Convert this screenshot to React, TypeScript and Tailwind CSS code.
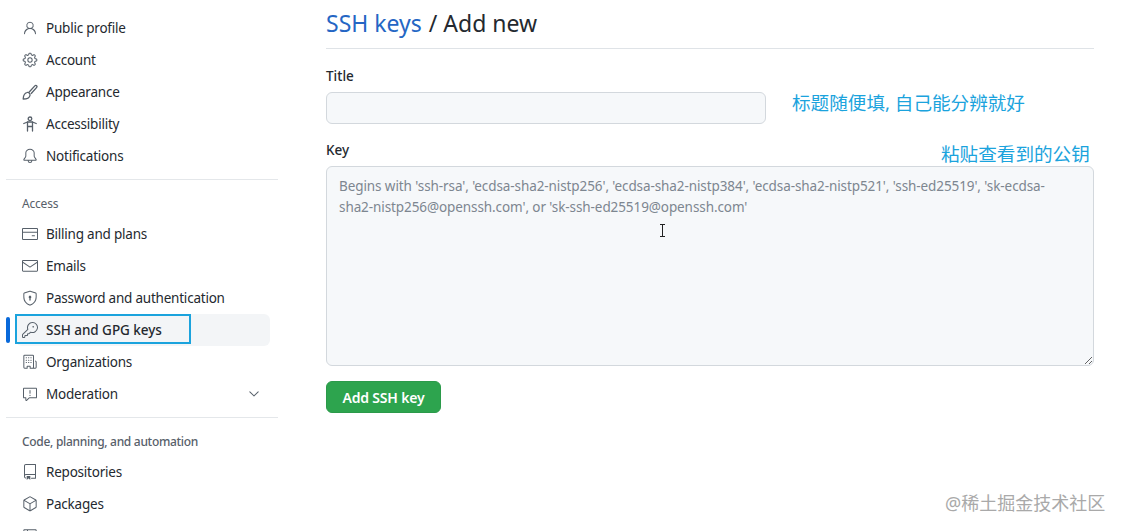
import type { ComponentType } from 'react';
import {
  GoPerson,
  GoGear,
  GoBell,
  GoCreditCard,
  GoMail,
  GoShieldLock,
  GoKey,
  GoOrganization,
  GoReport,
  GoChevronDown,
  GoRepo,
  GoPackage,
  GoTable,
} from 'react-icons/go';

type IconProps = { size?: number; className?: string };

function PaintbrushIcon({ size, className }: IconProps) {
  return (
    <svg width={size} height={size} viewBox="0 0 16 16" fill="none" stroke="currentColor" strokeWidth="1.3" strokeLinejoin="round" className={className}>
      <path d="M7 8.300 12.800 1.900c.6-.6 1.500-.6 1.900-.1.400.5.400 1.200-.2 1.800L9 9.800" />
      <path d="M5 8.500c1.600-.6 3.400.8 3 2.800-.4 2-3 3.700-6.800 3.700.2-1-.3-5.300 3.800-6.500Z" />
    </svg>
  );
}

function AccessibilityIcon({ size, className }: IconProps) {
  return (
    <svg width={size} height={size} viewBox="0 0 16 16" fill="none" stroke="currentColor" strokeWidth="1.3" strokeLinecap="round" strokeLinejoin="round" className={className}>
      <circle cx="8" cy="2.800" r="1.800" />
      <path d="M1.800 7.500 5.500 6h5l3.700 1.500" />
      <path d="M5.500 6v9M10.500 6v9M5.500 10.500h5" />
    </svg>
  );
}

interface NavItemProps {
  icon: ComponentType<IconProps>;
  label?: string;
  active?: boolean;
  chevron?: boolean;
}

function NavItem({ icon: Icon, label, active, chevron }: NavItemProps) {
  return (
    <div className={`relative flex h-8 items-center rounded-md pl-[6px] pr-2 ${active ? 'bg-[#f3f5f7]' : ''}`}>
      {active && <span className="absolute left-[-10px] top-[3px] h-[26px] w-1 rounded-md bg-[#0969da]" />}
      <Icon size={16} className="mr-2 shrink-0 text-[#57606a]" />
      <span className={`flex-1 text-[13.5px] leading-5 text-[#24292f] ${active ? 'font-medium tracking-[-0.05px]' : 'tracking-[-0.22px]'}`}>{label}</span>
      {chevron && <GoChevronDown size={16} className="text-[#57606a]" />}
    </div>
  );
}

const font = "font-['Noto_Sans','Noto_Sans_CJK_SC',sans-serif]";

export default function App() {
  return (
    <div className={`relative flex h-[531px] w-[1122px] overflow-hidden bg-white text-sm ${font}`}>
      <aside className="ml-[6px] w-[272px] shrink-0 pt-3">
        <div className="ml-[10px] mr-2">
          <NavItem icon={GoPerson} label="Public profile" />
          <NavItem icon={GoGear} label="Account" />
          <NavItem icon={PaintbrushIcon} label="Appearance" />
          <NavItem icon={AccessibilityIcon} label="Accessibility" />
          <NavItem icon={GoBell} label="Notifications" />
        </div>
        <hr className="mt-[7px] border-[#e4e7ea]" />
        <h3 className="ml-4 mt-4 h-[15px] text-xs leading-[15px] tracking-[-0.2px] text-[#57606a]">Access</h3>
        <div className="ml-[10px] mr-2 mt-[7px]">
          <NavItem icon={GoCreditCard} label="Billing and plans" />
          <NavItem icon={GoMail} label="Emails" />
          <NavItem icon={GoShieldLock} label="Password and authentication" />
          <NavItem icon={GoKey} label="SSH and GPG keys" active />
          <NavItem icon={GoOrganization} label="Organizations" />
          <NavItem icon={GoReport} label="Moderation" chevron />
        </div>
        <hr className="mt-[7px] border-[#e4e7ea]" />
        <h3 className="ml-4 mt-4 h-[15px] text-xs font-medium leading-[15px] tracking-[-0.3px] text-[#57606a]">Code, planning, and automation</h3>
        <div className="ml-[10px] mr-2 mt-[7px]">
          <NavItem icon={GoRepo} label="Repositories" />
          <NavItem icon={GoPackage} label="Packages" />
          <NavItem icon={GoTable} />
        </div>
      </aside>

      <main className="ml-[48px] w-[768px] shrink-0">
        <div className="flex h-[49px] items-center border-b border-[#dfe3e7] pb-[2px] text-[23px]">
          <a className="text-[#2566c4]">SSH keys</a>
          <span className="ml-[7px] text-[#24292f]">/ Add new</span>
        </div>
        <label className="mt-[18px] block h-[18px] text-[13.5px] font-medium leading-[18px] text-[#24292f]">Title</label>
        <input className="mt-[7px] block h-8 w-[440px] rounded-md border border-[#d3d8dd] bg-[#f6f8fa]" />
        <label className="mt-[17px] block h-[18px] text-[13.5px] font-medium leading-[18px] text-[#24292f]">Key</label>
        <textarea
          className="mt-[7px] block h-[200px] w-full rounded-md border border-[#d3d8dd] bg-[#f6f8fa] px-3 pb-2 pt-[9px] text-[13.5px] leading-[21px] tracking-[-0.09px] placeholder:text-[#7d8690]"
          placeholder={"Begins with 'ssh-rsa', 'ecdsa-sha2-nistp256', 'ecdsa-sha2-nistp384', 'ecdsa-sha2-nistp521', 'ssh-ed25519', 'sk-ecdsa-\nsha2-nistp256@openssh.com', or 'sk-ssh-ed25519@openssh.com'"}
        />
        <button className="mt-[15px] h-8 w-[115px] rounded-md border border-[#2b9a4a] bg-[#2da44e] pt-[2px] font-semibold tracking-[-0.2px] text-white">
          Add SSH key
        </button>
      </main>

      {/* screenshot annotations */}
      <div className="absolute left-[15px] top-[314px] h-[30px] w-[176px] border-2 border-[#1ba3dd]" />
      <span className="absolute left-[792px] top-[90px] text-[18.6px] leading-[26px] text-[#1ba3dd]">标题随便填, 自己能分辨就好</span>
      <span className="absolute left-[941px] top-[141px] text-[18.6px] leading-[26px] text-[#1ba3dd]">粘贴查看到的公钥</span>
      <span className="absolute left-[945px] top-[491px] text-lg leading-6 text-[#a9a9a9]">@稀土掘金技术社区</span>
      <svg className="absolute left-[659px] top-[224px]" width="7" height="13" viewBox="0 0 7 13">
        <path d="M1 .5h5M3.5.5v12M1 12.5h5" stroke="#222" fill="none" />
      </svg>
    </div>
  );
}
